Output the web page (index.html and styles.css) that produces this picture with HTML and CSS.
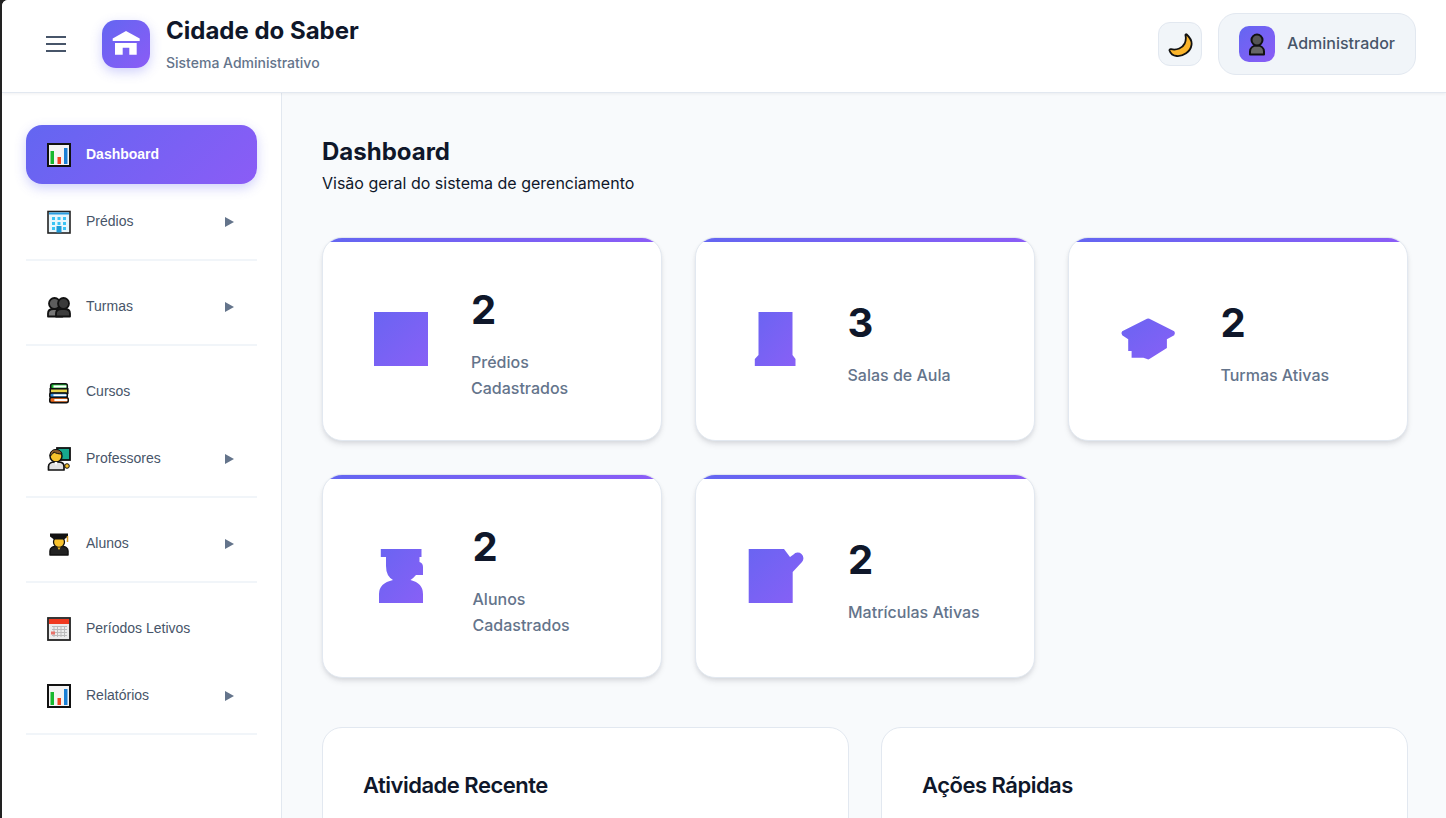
FILE: index.html
```html
<!DOCTYPE html>
<html lang="pt-BR">
<head>
  <meta charset="UTF-8">
  <meta name="viewport" content="width=device-width, initial-scale=1.0">
  <title>Cidade do Saber</title>
  <link rel="stylesheet" href="styles.css">
</head>
<body>
  <svg class="svg-defs" width="0" height="0" aria-hidden="true">
    <defs>
      <linearGradient id="brand" x1="0" y1="0" x2="1" y2="1">
        <stop offset="0" stop-color="#6a64f2"/>
        <stop offset="1" stop-color="#8860f6"/>
      </linearGradient>
      <symbol id="emoji-chart" viewBox="0 0 24 24">
        <rect x="1" y="1" width="22" height="22" fill="#f4f4f4" stroke="#111" stroke-width="2"/>
        <rect x="3.500" y="8" width="3.500" height="13" fill="#16b82e"/>
        <rect x="10.500" y="14" width="3.500" height="7" fill="#f0451f"/>
        <rect x="17" y="5" width="3.500" height="16" fill="#1a7fd4"/>
      </symbol>
      <symbol id="emoji-bust" viewBox="0 0 24 24">
        <path d="M5 19.500c0-3.500 3-6 7-6s7 2.500 7 6v3H5z" fill="#666" stroke="#111" stroke-width="2" stroke-linejoin="round"/>
        <circle cx="12" cy="8" r="5.500" fill="#555" stroke="#111" stroke-width="2"/>
      </symbol>
    </defs>
  </svg>

  <div class="app">
    <header class="topbar">
      <div class="topbar-left">
        <button class="menu-btn" aria-label="Menu">
          <span></span><span></span><span></span>
        </button>
        <div class="logo">
          <svg width="48" height="48" viewBox="0 0 48 48">
            <path d="M24 11 37.700 18.500V21H10.700V18.500z" fill="#fff"/>
            <path d="M13 23H34.700V34.700H27.300V27.700H20.700V34.700H13z" fill="#fff"/>
          </svg>
        </div>
        <div>
          <div class="brand-title">Cidade do Saber</div>
          <div class="brand-sub">Sistema Administrativo</div>
        </div>
      </div>
      <div class="topbar-right">
        <button class="theme-btn" aria-label="Tema">
          <svg width="26" height="26" viewBox="0 0 26 26">
            <path d="M19.700 3.500C23.500 7 25 11 24.500 14 23.500 21 16 25.500 9.700 25 6.500 24.800 3.500 22.500 2.500 19.500 2.300 18.500 3 18 4 18.200 10 19.500 15.500 17 17.700 12.500 19 9.500 19 6.500 18.500 4.500 18.300 3.500 19 3 19.700 3.500z" fill="#fbb52c" stroke="#111" stroke-width="1.800" stroke-linejoin="round"/>
          </svg>
        </button>
        <div class="user-pill">
          <div class="avatar">
            <svg width="24" height="24"><use href="#emoji-bust"/></svg>
          </div>
          <span>Administrador</span>
        </div>
      </div>
    </header>

    <div class="layout">
      <nav class="sidebar">
        <a class="nav-item active">
          <svg class="nav-icon" width="24" height="24"><use href="#emoji-chart"/></svg>
          Dashboard
        </a>
        <div class="nav-group">
          <a class="nav-item">
            <svg class="nav-icon" width="24" height="24" viewBox="0 0 24 24">
              <rect x="1" y="1.500" width="22" height="21.500" fill="#e8f6fc" stroke="#222" stroke-width="1.600"/>
              <rect x="2" y="2.500" width="20" height="2" fill="#2a9de0"/>
              <path d="M5 7h3v3H5zM10.500 7h3v3h-3zM16 7h3v3h-3zM5 12h3v3H5zM10.500 12h3v3h-3zM16 12h3v3h-3zM5 17h3v3H5zM16 17h3v3h-3z" fill="#38c3f5"/>
              <rect x="9.500" y="16" width="5" height="6.500" fill="#1e9ad6"/>
            </svg>
            Prédios
            <svg class="nav-arrow" width="9" height="10"><path d="M0 0 9 5 0 10z"/></svg>
          </a>
        </div>
        <div class="nav-group">
          <a class="nav-item">
            <svg class="nav-icon" width="24" height="24" viewBox="0 0 24 24">
              <path d="M1 21.500v-3c0-3 2.500-4.500 5.500-4.500h4c3 0 5 1.500 5 4.500v3z" fill="#777" stroke="#111" stroke-width="1.800" stroke-linejoin="round"/>
              <path d="M9 21.500v-3c0-3 2.500-4.500 5.500-4.500h3c3 0 5.500 1.500 5.500 4.500v3z" fill="#3c3c3c" stroke="#111" stroke-width="1.800" stroke-linejoin="round"/>
              <circle cx="7.500" cy="8.500" r="5.500" fill="#5c5c5c" stroke="#111" stroke-width="1.800"/>
              <circle cx="16.500" cy="8.500" r="5.500" fill="#3a3a3a" stroke="#111" stroke-width="1.800"/>
            </svg>
            Turmas
            <svg class="nav-arrow" width="9" height="10"><path d="M0 0 9 5 0 10z"/></svg>
          </a>
        </div>
        <a class="nav-item">
          <svg class="nav-icon" width="24" height="24" viewBox="-1 -2 26 26">
            <rect x="3" y="2" width="18" height="6" rx="2" fill="#16b82e" stroke="#111" stroke-width="1.700"/>
            <rect x="6" y="3.800" width="14" height="2.400" fill="#fff"/>
            <rect x="2.500" y="7.500" width="19" height="5" fill="#e8d44a" stroke="#111" stroke-width="1.700"/>
            <rect x="2" y="12" width="19" height="5" rx="2" fill="#2a88d8" stroke="#111" stroke-width="1.700"/>
            <rect x="6" y="13.500" width="14" height="2" fill="#fff"/>
            <rect x="2" y="17" width="20" height="5.500" rx="2" fill="#f26a1b" stroke="#111" stroke-width="1.700"/>
            <rect x="7" y="18.600" width="14" height="2.300" fill="#fff"/>
          </svg>
          Cursos
        </a>
        <div class="nav-group">
          <a class="nav-item">
            <svg class="nav-icon" width="24" height="24" viewBox="0 0 24 24">
              <rect x="10" y="1" width="13" height="12" fill="#17a98e" stroke="#111" stroke-width="1.800"/>
              <path d="M1.500 23v-3.500c0-3 3-4.500 6-4.500h4c3 0 5.500 1.500 5.500 4.500V23z" fill="#e2e2e2" stroke="#111" stroke-width="1.700" stroke-linejoin="round"/>
              <circle cx="9" cy="9" r="6" fill="#f8c22c" stroke="#111" stroke-width="1.500"/>
              <path d="M3 9C3 4.500 5.500 2.500 9 2.500c3 0 5.300 1.500 6 4.500-3 0-6-.5-8-2-1 1.500-2.500 3.300-4 4z" fill="#8a5a2b" stroke="#111" stroke-width="1"/>
              <path d="M7.500 15l1.500 4 1.500-4z" fill="#fff"/>
              <circle cx="20" cy="19" r="2.300" fill="#f8c22c" stroke="#111" stroke-width="1"/>
            </svg>
            Professores
            <svg class="nav-arrow" width="9" height="10"><path d="M0 0 9 5 0 10z"/></svg>
          </a>
        </div>
        <div class="nav-group">
          <a class="nav-item">
            <svg class="nav-icon" width="24" height="24" viewBox="0 0 24 24">
              <path d="M3 23v-4c0-3 3-4.500 5-4.500h8c2 0 5 1.500 5 4.500v4z" fill="#222" stroke="#111" stroke-width="1.500" stroke-linejoin="round"/>
              <circle cx="12" cy="10" r="5.500" fill="#f8c22c" stroke="#111" stroke-width="1.300"/>
              <path d="M3 1.500H21V4.500L17 7.500H7L3 4.500z" fill="#111"/>
              <path d="M20.500 4v6" stroke="#d89a1c" stroke-width="1.500"/>
              <path d="M10.500 15.500 12 18l1.500-2.500z" fill="#f8c22c"/>
            </svg>
            Alunos
            <svg class="nav-arrow" width="9" height="10"><path d="M0 0 9 5 0 10z"/></svg>
          </a>
        </div>
        <a class="nav-item">
          <svg class="nav-icon" width="24" height="24" viewBox="0 0 24 24">
            <rect x="1" y="1" width="22" height="22" fill="#ececec" stroke="#222" stroke-width="1.800"/>
            <rect x="2" y="2" width="20" height="5" fill="#f0391f"/>
            <path d="M5 9.500h15M5 12.500h15M5 15.500h15M5 18.500h15M7 9v11M10.500 9v11M14 9v11M17.500 9v11" stroke="#bbb" stroke-width="1"/>
            <rect x="4" y="14.500" width="4" height="3" fill="#e8736a"/>
          </svg>
          Períodos Letivos
        </a>
        <div class="nav-group">
          <a class="nav-item">
            <svg class="nav-icon" width="24" height="24"><use href="#emoji-chart"/></svg>
            Relatórios
            <svg class="nav-arrow" width="9" height="10"><path d="M0 0 9 5 0 10z"/></svg>
          </a>
        </div>
      </nav>

      <main class="main">
        <h1 class="page-title">Dashboard</h1>
        <p class="page-sub">Visão geral do sistema de gerenciamento</p>

        <section class="stats">
          <div class="stat-card">
            <svg class="stat-icon" width="84" height="54"><rect x="11" width="54" height="54" fill="url(#brand)"/></svg>
            <div>
              <div class="stat-value">2</div>
              <div class="stat-label">Prédios Cadastrados</div>
            </div>
          </div>
          <div class="stat-card">
            <svg class="stat-icon" width="87.500" height="54"><path d="M22.500 0H56.500V43L59.500 47V54H18.800V47L22.500 43z" fill="url(#brand)"/></svg>
            <div>
              <div class="stat-value">3</div>
              <div class="stat-label">Salas de Aula</div>
            </div>
          </div>
          <div class="stat-card">
            <svg class="stat-icon" width="87.400" height="54"><path d="M38 6.800Q39.200 6 40.400 6.800L65.200 19.300Q66.900 21.300 65.200 23.300L57.900 27.300V36L40.400 47Q39.200 47.800 38 47L34.400 45.700H22.600V39H19.200V27.300L13.200 23.300Q11.400 21.300 13.200 19.300z" fill="url(#brand)"/></svg>
            <div>
              <div class="stat-value">2</div>
              <div class="stat-label">Turmas Ativas</div>
            </div>
          </div>
          <div class="stat-card">
            <svg class="stat-icon" width="85.500" height="54"><path d="M17.800 0H58.500V8H56.500V13Q60 14 60 18V26H53Q50.500 29 47.500 31Q60 34 60 45V54H16V45Q16 34 30 31Q23 27 23 17V8H17.800z" fill="url(#brand)"/></svg>
            <div>
              <div class="stat-value">2</div>
              <div class="stat-label">Alunos Cadastrados</div>
            </div>
          </div>
          <div class="stat-card">
            <svg class="stat-icon" width="88" height="54"><path d="M12.700 0H48L54 8 57.500 5.500A5.500 5.500 0 0 1 66 13L56.700 23V54H12.700z" fill="url(#brand)"/></svg>
            <div>
              <div class="stat-value">2</div>
              <div class="stat-label">Matrículas Ativas</div>
            </div>
          </div>
        </section>

        <section class="panels">
          <div class="panel"><h2>Atividade Recente</h2></div>
          <div class="panel"><h2>Ações Rápidas</h2></div>
        </section>
      </main>
    </div>
  </div>
</body>
</html>
```

FILE: styles.css
```css
* {
  box-sizing: border-box;
}
html, body {
  height: 100%;
  overflow: hidden;
}
body {
  margin: 0;
  font-family: Inter, "Noto Sans", sans-serif;
  line-height: 1.6;
  color: #0f172a;
  background: #222;
}
.svg-defs {
  position: absolute;
}
.app {
  margin-left: 2px;
  height: 100%;
  display: flex;
  flex-direction: column;
  background: #fff;
  border-top-left-radius: 6px;
  overflow: hidden;
}

/* top bar */
.topbar {
  flex: none;
  height: 93px;
  display: flex;
  align-items: center;
  justify-content: space-between;
  padding: 0 30px 4px 38px;
  background: #fff;
  border-bottom: 1px solid #e2e8f0;
  box-shadow: 0 1px 3px rgba(15, 23, 42, 0.06);
  position: relative;
}
.topbar-left, .topbar-right {
  display: flex;
  align-items: center;
}
.topbar-right {
  gap: 16px;
}
.menu-btn {
  width: 32px;
  height: 32px;
  margin-right: 30px;
  padding: 0 6px;
  display: flex;
  flex-direction: column;
  justify-content: center;
  gap: 5px;
  background: none;
  border: none;
}
.menu-btn span {
  display: block;
  height: 2px;
  background: #475569;
}
.logo {
  width: 48px;
  height: 48px;
  margin-right: 16px;
  border-radius: 14px;
  background: linear-gradient(135deg, #6366f1, #8b5cf6);
  box-shadow: 0 4px 12px rgba(99, 102, 241, 0.3);
}
.logo svg {
  display: block;
}
.brand-title {
  font-size: 24px;
  font-weight: 700;
  line-height: 36px;
  margin-top: -2px;
}
.brand-sub {
  font-size: 14px;
  font-weight: 500;
  line-height: 20px;
  margin-top: 4px;
  color: #64748b;
}
.theme-btn {
  width: 44px;
  height: 44px;
  padding: 0;
  display: flex;
  align-items: center;
  justify-content: center;
  background: #f1f5f9;
  border: 1px solid #e2e8f0;
  border-radius: 12px;
}
.user-pill {
  height: 62px;
  display: flex;
  align-items: center;
  gap: 12px;
  padding: 0 20px;
  font-size: 16px;
  font-weight: 500;
  color: #475569;
  background: #f1f5f9;
  border: 1px solid #e2e8f0;
  border-radius: 18px;
}
.avatar {
  width: 36px;
  height: 36px;
  display: flex;
  align-items: center;
  justify-content: center;
  border-radius: 10px;
  background: linear-gradient(135deg, #6366f1, #8b5cf6);
}

/* sidebar */
.layout {
  flex: 1;
  min-height: 0;
  display: flex;
}
.sidebar {
  flex: none;
  width: 280px;
  padding: 32px 24px;
  background: #fff;
  border-right: 1px solid #e2e8f0;
  font-family: "Liberation Sans", Arial, sans-serif;
}
.nav-item {
  height: 59px;
  margin-bottom: 8px;
  padding: 0 23px 0 21px;
  display: flex;
  align-items: center;
  gap: 15px;
  font-size: 14px;
  color: #475569;
  border-radius: 16px;
}
.nav-item.active {
  color: #fff;
  font-weight: 700;
  background: linear-gradient(135deg, #6366f1, #8b5cf6);
  box-shadow: 0 4px 12px rgba(99, 102, 241, 0.3);
}
.nav-icon {
  flex: none;
}
.nav-arrow {
  margin-left: auto;
  fill: #64748b;
}
.nav-group {
  margin-bottom: 16px;
  border-bottom: 2px solid #f1f5f9;
}

/* main content */
.main {
  flex: 1;
  min-width: 0;
  padding: 40px 38px 40px 40px;
  background: #f8fafc;
  overflow: hidden;
}
.page-title {
  margin: 0;
  font-size: 24px;
  font-weight: 700;
}
.page-sub {
  margin: 0 0 40px;
  font-size: 16px;
}
.stats {
  display: grid;
  grid-template-columns: repeat(3, 1fr);
  gap: 33px;
  margin-bottom: 49px;
}
.stat-card {
  position: relative;
  display: flex;
  align-items: center;
  gap: 24px;
  padding: 39px 40px;
  background: #fff;
  border: 1px solid #e2e8f0;
  border-radius: 20px;
  box-shadow: 0 4px 6px -1px rgba(15, 23, 42, 0.1), 0 2px 4px -1px rgba(15, 23, 42, 0.08);
  overflow: hidden;
}
.stat-card::before {
  content: "";
  position: absolute;
  top: 0;
  left: 0;
  right: 0;
  height: 4px;
  background: linear-gradient(90deg, #6366f1, #8b5cf6);
}
.stat-icon {
  flex: none;
}
.stat-value {
  font-size: 40px;
  font-weight: 700;
  line-height: 66px;
  margin-bottom: 6px;
}
.stat-label {
  font-size: 16px;
  line-height: 26px;
  font-weight: 500;
  color: #64748b;
}
.panels {
  display: grid;
  grid-template-columns: repeat(2, 1fr);
  gap: 32px;
}
.panel {
  min-height: 240px;
  padding: 40px;
  background: #fff;
  border: 1px solid #e2e8f0;
  border-radius: 20px;
}
.panel h2 {
  margin: 0;
  font-size: 22px;
  font-weight: 600;
  letter-spacing: -0.5px;
}
```
